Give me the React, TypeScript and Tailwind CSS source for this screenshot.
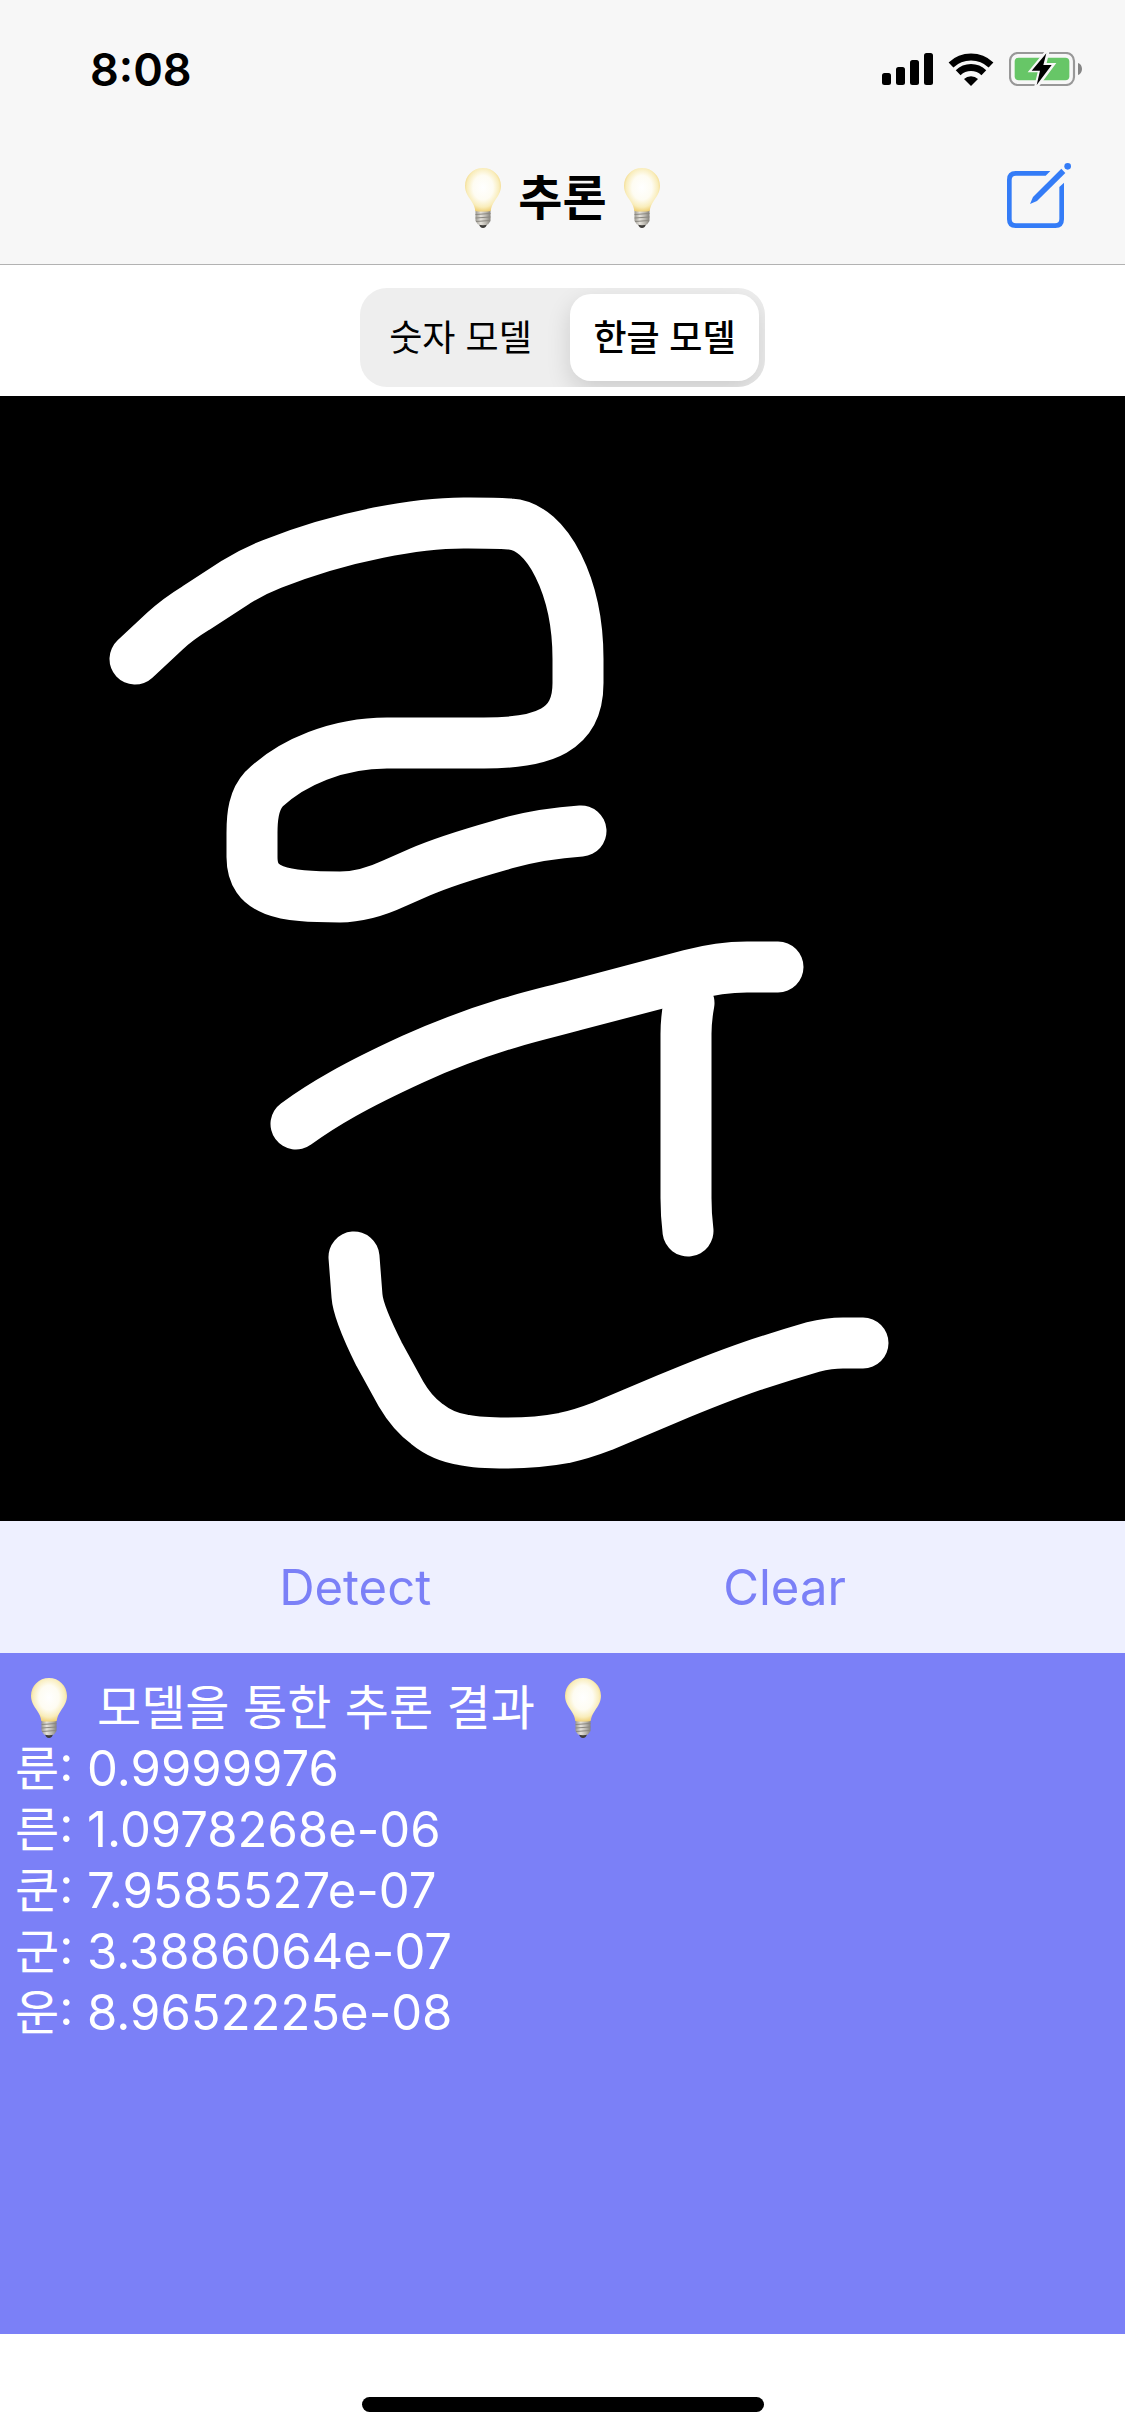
import { useId, useState } from "react";

function Bulb() {
  const id = useId();
  return (
    <svg className="h-[60px] w-9 shrink-0" viewBox="0 0 36 60" role="img" aria-label="전구">
      <defs>
        <radialGradient id={`${id}g`} cx="50%" cy="45%" r="56%">
          <stop offset="0" stopColor="#ffffff" />
          <stop offset="0.5" stopColor="#fefcf2" />
          <stop offset="0.8" stopColor="#f9edbb" />
          <stop offset="1" stopColor="#efcf74" />
        </radialGradient>
        <linearGradient id={`${id}b`} x1="0" x2="1" y1="0" y2="0">
          <stop offset="0" stopColor="#9b9890" />
          <stop offset="0.35" stopColor="#e6e3dc" />
          <stop offset="0.7" stopColor="#bab7af" />
          <stop offset="1" stopColor="#85827b" />
        </linearGradient>
      </defs>
      <path d="M14 56h8c-.5 2.500-2 4-4 4s-3.500-1.500-4-4z" fill="#3f3d3a" />
      <path d="M10.500 42h15v11l-2.500 3.500c-3 1-7 1-10 0L10.500 53z" fill={`url(#${id}b)`} />
      <path d="M10.500 46.500l15-1M10.500 50l15-1M11 53.500l14-1" stroke="#8b8881" strokeWidth="1" />
      <path
        d="M18 0C8 0 0 7.800 0 17.800 0 24 3 28 6 32.500c2.500 3.800 4 7 4.300 10.500 3 .8 12.400.8 15.400 0 .3-3.500 1.800-6.700 4.300-10.500 3-4.500 6-8.500 6-14.700C36 7.800 28 0 18 0z"
        fill={`url(#${id}g)`}
      />
    </svg>
  );
}

function StatusIcons() {
  return (
    <div className="flex items-center">
      <svg className="h-8 w-[51px]" viewBox="0 0 51 32" aria-label="신호">
        <rect x="0" y="20" width="9" height="12" rx="2.500" />
        <rect x="14" y="14" width="9" height="18" rx="2.500" />
        <rect x="28" y="7" width="9" height="25" rx="2.500" />
        <rect x="42" y="0" width="9" height="32" rx="2.500" />
      </svg>
      <svg className="ml-[15px] h-[33px] w-[46px]" viewBox="264 66 138 99" aria-label="Wi-Fi">
        <g fill="none" stroke="#000" strokeWidth="21">
          <path d="M273 102A87.500 87.500 0 0 1 393 102" />
          <path d="M294.500 125A56 56 0 0 1 371.500 125" />
        </g>
        <path d="M333 165L312 144A30 30 0 0 1 354 144Z" />
      </svg>
      <svg className="ml-[15px] h-[34px] w-[73px]" viewBox="447 66 219 102" aria-label="충전 중">
        <rect x="450" y="69" width="192" height="96" rx="24" fill="none" stroke="#989898" strokeWidth="6.500" />
        <path d="M654 99c7 2 12 9 12 18s-5 16-12 18z" fill="#858585" />
        <rect x="464" y="83" width="164" height="68" rx="12" fill="#67c667" />
        <path d="M556 62L503 127h30L522 172h13l54-73h-29l9-37z" fill="#f7f7f7" />
        <path d="M559 70L515 122h25l-10 43 45-60h-25z" fill="#000" />
      </svg>
    </div>
  );
}

function ComposeIcon() {
  return (
    <svg className="h-[65px] w-16" viewBox="441 396 192 195" aria-hidden="true">
      <path
        d="M571 420H467Q441 420 441 446V565Q441 591 467 591H586Q612 591 612 565V455L598 468V564Q598 577 585 577H468Q455 577 455 564V447Q455 434 468 434H557Z"
        fill="#347cf7"
      />
      <path d="M604 413L616 426L531 510L510 519L519 498Z" fill="#347cf7" />
      <circle cx="623" cy="406" r="10" fill="#347cf7" />
    </svg>
  );
}

const strokes = [
  "M135 263L165 235Q178 223 196 212L236 186Q254 175 272 168C342 140 420 126 469 127C485 127 497 127 510 128C548 130 578 192 578 263V287C578 334 545 347 484 347H387C338 347 292 366 264 393C254 404 252 418 252 437V461C252 496 282 501 340 501C362 501 380 494 395 487L420 476C450 463 480 455 508 447C533 440 553 437 581 435",
  "M296 728C311 717 327 707 343 698C366 685 389 674 413 663C444 649 476 637 509 627C532 620 554 615 576 609L690 579C712 573 730 571 747 571H778",
  "M689 607C687 618 686 624 686 638V802Q686 819 688 835",
  "M354 861L357 900C358 914 369 938 379 958L401 998C408 1010 416 1020 427 1028C438 1037 450 1042 464 1044C478 1047 493 1047 507 1047C530 1047 548 1045 564 1042C578 1039 590 1035 603 1030L667 1003C698 990 726 979 752 970Q782 960 813 951Q829 947 843 947H863",
];

const results = [
  { label: "룬", score: "0.9999976" },
  { label: "른", score: "1.0978268e-06" },
  { label: "쿤", score: "7.9585527e-07" },
  { label: "군", score: "3.3886064e-07" },
  { label: "운", score: "8.9652225e-08" },
];

const models = ["숫자 모델", "한글 모델"];

export default function App() {
  const [model, setModel] = useState("한글 모델");
  const [drawn, setDrawn] = useState(strokes);

  return (
    <div className="flex min-h-screen flex-col bg-white font-['Inter','Noto_Sans_CJK_KR',sans-serif] text-black">
      <header className="border-b border-[#b2b2b2] bg-[#f7f7f7]">
        <div className="flex h-[132px] items-center justify-between pr-[43px] pl-[90px] pt-1.5">
          <time className="text-[45px] font-semibold leading-none">8:08</time>
          <StatusIcons />
        </div>
        <div className="grid h-[132px] grid-cols-[1fr_auto_1fr] items-center">
          <h1 className="col-start-2 flex items-center gap-[17px] text-[48px] font-bold leading-none">
            <Bulb />
            추론
            <Bulb />
          </h1>
          <button type="button" aria-label="새로 작성" className="mr-[54px] mb-1.5 justify-self-end">
            <ComposeIcon />
          </button>
        </div>
      </header>

      <div className="flex h-[131px] justify-center pt-[23px]">
        <div
          role="radiogroup"
          aria-label="모델 선택"
          className="flex h-[99px] w-[405px] gap-[15px] overflow-hidden rounded-[27px] bg-[#eeeeee] p-1.5"
        >
          {models.map((name) => (
            <label
              key={name}
              className="relative flex flex-1 cursor-pointer items-center justify-center rounded-[21px] text-[36px] leading-none whitespace-nowrap has-checked:bg-white has-checked:font-medium has-checked:shadow-[0_9px_24px_rgba(0,0,0,0.14)]"
            >
              <input
                type="radio"
                name="model"
                value={name}
                checked={model === name}
                onChange={() => setModel(name)}
                className="absolute inset-0 cursor-pointer appearance-none"
              />
              {name}
            </label>
          ))}
        </div>
      </div>

      <main className="flex flex-1 flex-col">
        <svg className="aspect-square w-full bg-black" viewBox="0 0 1125 1125" role="img" aria-label="손글씨 입력">
          <g fill="none" stroke="#fff" strokeWidth="51" strokeLinecap="round" strokeLinejoin="round">
            {drawn.map((d) => (
              <path key={d} d={d} />
            ))}
          </g>
        </svg>

        <div className="flex h-[132px] items-center justify-center gap-[292px] bg-[#eef0ff] text-[49px] leading-none text-[#7b80f7]">
          <button type="button">Detect</button>
          <button type="button" onClick={() => setDrawn([])}>
            Clear
          </button>
        </div>

        <section className="flex-1 bg-[#7b80f7] px-[15px] pt-6 text-[49px] leading-[61px] text-white">
          <h2 className="flex items-center gap-[30px] pl-4 text-[48px]">
            <Bulb />
            모델을 통한 추론 결과
            <Bulb />
          </h2>
          <ul>
            {results.map(({ label, score }) => (
              <li key={label} className="flex">
                <span className="text-[48px]">{label}</span>
                <span className="whitespace-pre">: {score}</span>
              </li>
            ))}
          </ul>
        </section>
      </main>

      <footer className="flex h-[102px] items-end justify-center pb-6">
        <div className="h-[15px] w-[402px] rounded-full bg-black" />
      </footer>
    </div>
  );
}
